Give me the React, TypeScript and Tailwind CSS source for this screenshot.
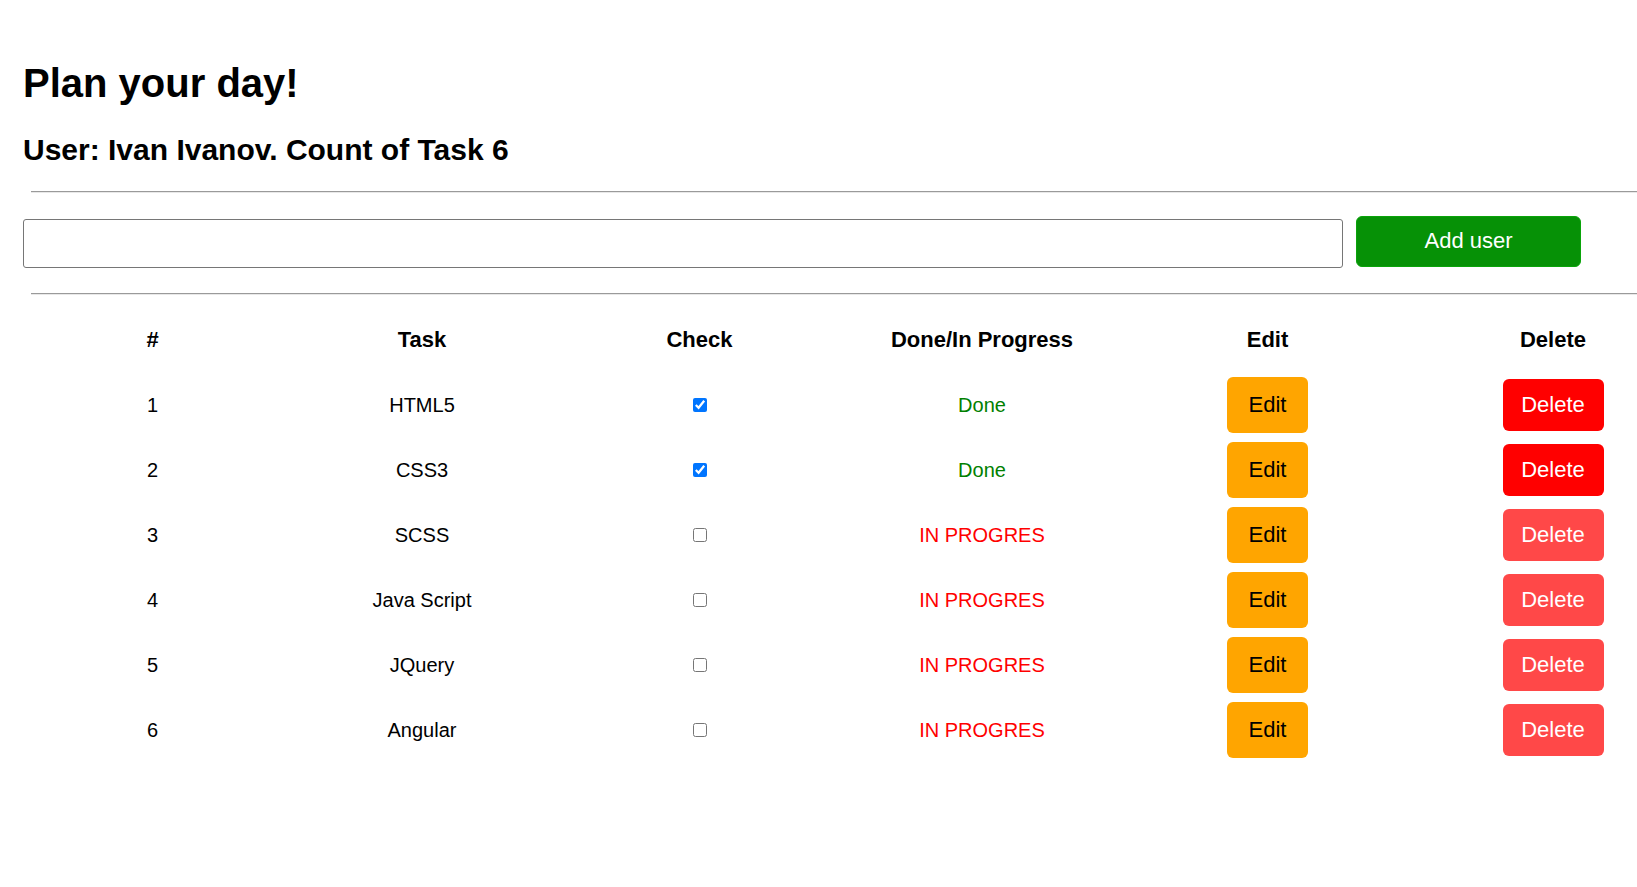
import React from 'react';

type Task = { id: number; title: string; done: boolean };

const tasks: Task[] = [
  { id: 1, title: 'HTML5', done: true },
  { id: 2, title: 'CSS3', done: true },
  { id: 3, title: 'SCSS', done: false },
  { id: 4, title: 'Java Script', done: false },
  { id: 5, title: 'JQuery', done: false },
  { id: 6, title: 'Angular', done: false },
];

const Divider = () => (
  <hr className="ml-[8px] h-0 border-0 border-t border-b border-t-[#9a9a9a] border-b-[#e8e8e8]" />
);

export default function App() {
  return (
    <div className="min-h-screen w-full overflow-hidden bg-white pl-[23px] text-black font-['Liberation_Sans',Arial,sans-serif]">
      <h1 className="mt-[63px] text-[40px] leading-[40px] font-bold">Plan your day!</h1>
      <h2 className="mt-[32px] text-[30px] leading-[30px] font-bold">
        User: Ivan Ivanov. Count of Task {tasks.length}
      </h2>

      <div className="mt-[26px]">
        <Divider />
      </div>

      <div className="mt-[23px] flex items-start gap-[13px]">
        <input
          type="text"
          className="mt-[3px] h-[49px] w-[1320px] rounded-[3px] border border-[#767676] bg-white px-2 text-[20px] outline-none"
        />
        <button className="h-[51px] w-[225px] rounded-[6px] border border-[#0aa40a] bg-[#069106] pb-[3px] text-[22px] text-white">
          Add user
        </button>
      </div>

      <div className="mt-[25px]">
        <Divider />
      </div>

      <table className="mt-[12px] w-[1675px] table-fixed border-collapse">
        <colgroup>
          <col className="w-[259px]" />
          <col className="w-[280px]" />
          <col className="w-[275px]" />
          <col className="w-[290px]" />
          <col className="w-[281px]" />
          <col className="w-[290px]" />
        </colgroup>
        <thead>
          <tr className="h-[65px] text-[22px] font-bold">
            <th className="text-center align-middle">#</th>
            <th className="text-center align-middle">Task</th>
            <th className="text-center align-middle">Check</th>
            <th className="text-center align-middle">Done/In Progress</th>
            <th className="text-center align-middle">Edit</th>
            <th className="text-center align-middle">Delete</th>
          </tr>
        </thead>
        <tbody>
          {tasks.map((t) => (
            <tr key={t.id} className="h-[65px] text-[20px]">
              <td className="text-center align-middle">{t.id}</td>
              <td className="text-center align-middle">{t.title}</td>
              <td className="text-center align-middle">
                <input
                  type="checkbox"
                  defaultChecked={t.done}
                  className="m-0 h-[14px] w-[14px] -translate-y-[1px] align-middle"
                />
              </td>
              <td
                className={`text-center align-middle ${
                  t.done ? 'text-[#008000]' : 'text-[#ff0000]'
                }`}
              >
                {t.done ? 'Done' : 'IN PROGRES'}
              </td>
              <td className="text-center align-middle">
                <button className="h-[56px] w-[81px] rounded-[6px] bg-[#ffa500] text-[22px] text-black">
                  Edit
                </button>
              </td>
              <td className="text-center align-middle">
                <button
                  className={`h-[52px] w-[101px] rounded-[6px] text-[22px] text-white ${
                    t.done ? 'bg-[#ff0000]' : 'bg-[#ff4848]'
                  }`}
                >
                  Delete
                </button>
              </td>
            </tr>
          ))}
        </tbody>
      </table>
    </div>
  );
}
